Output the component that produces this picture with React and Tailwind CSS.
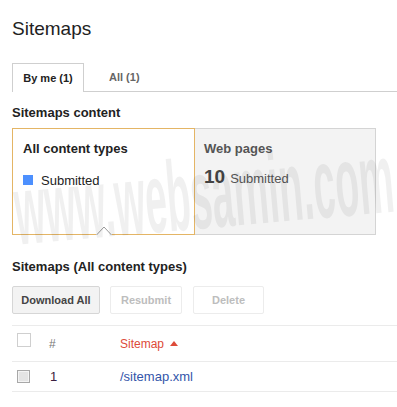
import React from "react";

export default function App() {
  return (
    <div className="relative w-[397px] h-[407px] bg-white overflow-hidden font-['Liberation_Sans',Arial,sans-serif] text-[#222]">
      <div className="pl-[12px]">
        <h1 className="pt-[16px] text-[19px] leading-[26px] text-[#222]">Sitemaps</h1>

        <div className="mt-[21px] flex h-[29px] border-b border-[#cfcfcf]">
          <div className="relative z-10 flex h-[29px] w-[72px] items-center justify-center border border-b-0 border-[#cfcfcf] bg-white text-[11px] font-bold leading-[28px] text-[#222]">
            By me (1)
          </div>
          <div className="flex items-center pl-[25px] text-[11px] font-bold leading-[28px] text-[#666]">
            All (1)
          </div>
        </div>

        <div className="mt-[13px] text-[13px] font-bold leading-[16px] text-[#222]">Sitemaps content</div>

        <div className="mt-[7px] flex">
          <div className="relative h-[107px] w-[183px] border border-[#e4b565] bg-white pl-[10px] pt-[12px]">
            <div className="text-[13px] font-bold leading-[16px] text-[#222]">All content types</div>
            <div className="mt-[16px] flex items-start">
              <div className="mt-[2px] h-[10px] w-[10px] bg-[#4d90fe]" />
              <div className="ml-[8px] text-[13px] leading-[16px] text-[#222]">Submitted</div>
            </div>
            <svg className="absolute bottom-[-1px] left-[83px]" width="16" height="9" viewBox="0 0 16 9">
              <rect x="0" y="8" width="16" height="1" fill="#fff" />
              <polyline points="0.5,9 8,1 15.5,9" fill="#fff" stroke="#9a9a9a" strokeWidth="1" />
            </svg>
          </div>
          <div className="h-[107px] w-[181px] border border-l-0 border-[#d4d4d4] bg-[#f3f3f3] pl-[9px] pt-[12px]">
            <div className="text-[13px] font-bold leading-[16px] text-[#555]">Web pages</div>
            <div className="mt-[8px] flex items-baseline gap-[5px]">
              <span className="text-[19px] font-bold leading-[24px] text-[#444]">10</span>
              <span className="text-[13px] leading-[16px] text-[#555]">Submitted</span>
            </div>
          </div>
        </div>

        <div className="mt-[24px] text-[13px] font-bold leading-[16px] text-[#222]">Sitemaps (All content types)</div>

        <div className="mt-[11px] flex">
          <div className="flex h-[28px] w-[88px] items-center justify-center rounded-[2px] border border-[#d6d6d6] bg-[#f3f3f3] text-[11px] font-bold text-[#444]">
            Download All
          </div>
          <div className="ml-[10px] flex h-[28px] w-[72px] items-center justify-center rounded-[2px] border border-[#ececec] bg-white text-[11px] font-bold text-[#bdbdbd]">
            Resubmit
          </div>
          <div className="ml-[11px] flex h-[28px] w-[71px] items-center justify-center rounded-[2px] border border-[#ececec] bg-white text-[11px] font-bold text-[#bdbdbd]">
            Delete
          </div>
        </div>

        <div className="mt-[11px]">
          <div className="flex h-[36px] items-center border-t border-[#ebebeb]">
            <div className="w-[37px] pl-[5px]">
              <div className="mb-[8px] h-[14px] w-[14px] border border-[#cfcfcf] bg-white" />
            </div>
            <div className="w-[71px] text-[12px] leading-[14px] text-[#777]">#</div>
            <div className="flex items-center text-[12px] leading-[14px] text-[#dd4b39]">
              Sitemap
              <svg className="ml-[6px]" width="8" height="5" viewBox="0 0 8 5">
                <polygon points="0,5 4,0 8,5" fill="#dd4b39" />
              </svg>
            </div>
          </div>
          <div className="flex h-[31px] items-center border-y border-[#ebebeb]">
            <div className="w-[37px] pl-[5px]">
              <div className="h-[13px] w-[13px] border border-[#a8a8a8] bg-[#e4e4e4] shadow-[inset_0_0_0_1px_#f4f4f4]" />
            </div>
            <div className="w-[71px] pl-[1px] text-[13px] leading-[16px] text-[#3a2040]">1</div>
            <div className="text-[13px] leading-[16px] text-[#3355aa]">/sitemap.xml</div>
          </div>
        </div>
      </div>

      <div aria-hidden="true" className="pointer-events-none absolute left-[10px] top-[160px] origin-top-left rotate-[-5deg] select-none">
        <div className="origin-top-left scale-x-[0.39] whitespace-nowrap text-[100px] font-bold leading-[100px] text-black/[0.06]">
          www.websamin.com
        </div>
      </div>
    </div>
  );
}
